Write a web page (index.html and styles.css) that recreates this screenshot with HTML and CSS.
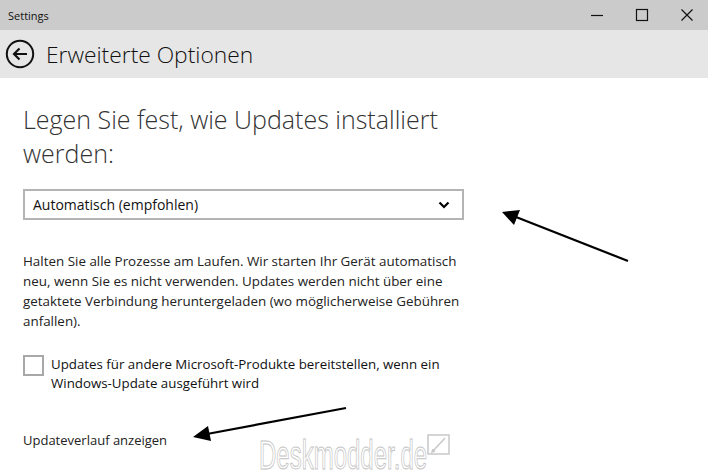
FILE: index.html
```html
<!DOCTYPE html>
<html>

<head>
    <title>Settings</title>
    <link rel="stylesheet" href="styles.css">
</head>

<body>
    <div class="titlebar">
        <span class="app-name">Settings</span>
        <div class="window-buttons">
            <span class="win-btn">
                <svg width="14" height="14" viewBox="0 0 14 14"><path d="M1 7.5h12" stroke="#111" stroke-width="1.2"/></svg>
            </span>
            <span class="win-btn">
                <svg width="14" height="14" viewBox="0 0 14 14"><rect x="1.5" y="1.5" width="11" height="11" fill="none" stroke="#111" stroke-width="1.2"/></svg>
            </span>
            <span class="win-btn">
                <svg width="14" height="14" viewBox="0 0 14 14"><path d="M1.5 1.5l11 11M12.5 1.5l-11 11" stroke="#111" stroke-width="1.2"/></svg>
            </span>
        </div>
    </div>

    <div class="header">
        <svg class="back-icon" width="30" height="30" viewBox="0 0 30 30">
            <circle cx="15" cy="15" r="13.2" fill="none" stroke="#111" stroke-width="2"/>
            <path d="M22 15H9M14.5 9.5L9 15l5.5 5.5" fill="none" stroke="#111" stroke-width="2.2"/>
        </svg>
        <h1>Erweiterte Optionen</h1>
    </div>

    <div class="content">
        <h2>Legen Sie fest, wie Updates installiert<br>werden:</h2>

        <div class="select-box">
            <span>Automatisch (empfohlen)</span>
            <svg width="12" height="8" viewBox="0 0 12 8"><path d="M1.5 1.5L6 6l4.5-4.5" fill="none" stroke="#000" stroke-width="2.2"/></svg>
        </div>

        <p class="note">Halten Sie alle Prozesse am Laufen. Wir starten Ihr Gerät automatisch<br>neu, wenn Sie es nicht verwenden. Updates werden nicht über eine<br>getaktete Verbindung heruntergeladen (wo möglicherweise Gebühren<br>anfallen).</p>

        <label class="check-row">
            <span class="check-box"></span>
            <span class="check-label">Updates für andere Microsoft-Produkte bereitstellen, wenn ein<br>Windows-Update ausgeführt wird</span>
        </label>

        <a class="history-link">Updateverlauf anzeigen</a>
    </div>

    <!-- annotations drawn over the screenshot -->
    <svg class="annotations" width="708" height="475" viewBox="0 0 708 475">
        <path d="M628 261L516 217" stroke="#000" stroke-width="2.2"/>
        <path d="M502 212l18-2-6 15z" fill="#000"/>
        <path d="M346 408L207 434" stroke="#000" stroke-width="2.2"/>
        <path d="M193 437l15-11 3 15z" fill="#000"/>
    </svg>

    <div class="watermark">
        <div class="wm-box"><span class="wm-text">Deskmodder.de</span></div>
        <svg width="24" height="22" viewBox="0 0 24 22">
            <rect x="1" y="1" width="21" height="19" fill="none" stroke="#c8c8c8" stroke-width="1.5"/>
            <path d="M6 17L18 4M8 17l-3 1 1-3" fill="none" stroke="#c8c8c8" stroke-width="1.5"/>
        </svg>
    </div>
</body>

</html>
```

FILE: styles.css
```css
body {
    margin: 0;
    font-family: 'Open Sans', 'Noto Sans', sans-serif;
    background: #fff;
    color: #222;
    position: relative;
    width: 708px;
    height: 475px;
    overflow: hidden;
}

.titlebar {
    height: 30px;
    background: #cbcbcb;
    display: flex;
    align-items: center;
    justify-content: space-between;
}

.app-name {
    font-size: 11px;
    margin-left: 8px;
    color: #111;
}

.window-buttons {
    display: flex;
    margin-right: 14px;
    gap: 31px;
}

.win-btn {
    display: flex;
    width: 14px;
    height: 14px;
}

.header {
    height: 48px;
    background: #e6e6e6;
    display: flex;
    align-items: center;
    padding-left: 5px;
}

.back-icon {
    display: block;
}

.header h1 {
    margin: 0 0 0 11px;
    font-size: 22.8px;
    font-weight: 300;
    color: #111;
}

.content {
    padding: 0 23px;
}

.content h2 {
    margin: 24px 0 0;
    font-size: 25px;
    line-height: 34px;
    font-weight: 300;
    color: #333;
}

.select-box {
    margin-top: 19px;
    width: 417px;
    height: 27px;
    border: 2px solid #b4b4b4;
    display: flex;
    align-items: center;
    justify-content: space-between;
    padding: 0 12px 0 8px;
    font-size: 14px;
    color: #111;
}

.note {
    margin: 31px 0 0;
    font-size: 13.4px;
    line-height: 20px;
    color: #222;
}

.check-row {
    display: flex;
    margin-top: 24px;
}

.check-box {
    width: 17px;
    height: 17px;
    border: 2px solid #a8a8a8;
    margin-top: 0;
    flex-shrink: 0;
}

.check-label {
    margin-left: 7px;
    font-size: 13.3px;
    line-height: 19px;
    color: #111;
}

.history-link {
    display: block;
    margin-top: 38px;
    font-size: 13px;
    color: #222;
}

.annotations {
    position: absolute;
    left: 0;
    top: 0;
}

.watermark {
    position: absolute;
    left: 259px;
    top: 437px;
    display: flex;
    align-items: flex-start;
}

.wm-box {
    width: 168px;
}

.wm-text {
    display: inline-block;
    font-family: 'Liberation Sans', sans-serif;
    font-size: 40px;
    line-height: 36px;
    color: #fff;
    -webkit-text-stroke: 1px #c4c4c4;
    transform: scaleX(0.6);
    transform-origin: left top;
    white-space: nowrap;
}

.watermark svg {
    margin-top: -3px;
}
```
